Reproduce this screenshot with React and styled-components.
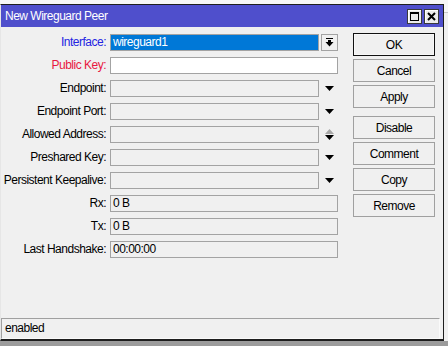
import React from "react";
import styled, { createGlobalStyle, css } from "styled-components";

const GlobalStyle = createGlobalStyle`
  html, body { margin: 0; padding: 0; }
  body {
    width: 448px;
    height: 346px;
    overflow: hidden;
    background: #f7f7f7;
    font-family: "Liberation Sans", Arial, sans-serif;
    font-size: 12px;
    letter-spacing: -0.5px;
    color: #000;
  }
  * { box-sizing: border-box; }
`;

const Desktop = styled.div`
  width: 448px;
  height: 346px;
  display: flex;
  flex-direction: column;
  background: #f7f7f7;
`;

const TopStrip = styled.div`
  height: 4px;
  flex: none;
`;

const WindowRow = styled.div`
  display: flex;
  flex: none;
`;

const Window = styled.div`
  width: 444px;
  height: 337px;
  display: flex;
  flex-direction: column;
  background: #f0f0f0;
  border-top: 1px solid #1e1e1e;
  border-right: 1px solid #1e1e1e;
  border-left: 1px solid #e6e6e6;
  border-bottom: 2px solid #1e1e1e;
`;

const SideStrip = styled.div`
  flex: 1;
  background: #f0f0f0;
  border-top: 1px solid #c8c8c8;
  margin-top: 8px;
`;

const BottomStrip = styled.div`
  flex: 1;
  background: #9c9c9c;
`;

const TitleBar = styled.div`
  height: 22px;
  flex: none;
  display: flex;
  align-items: center;
  background: #4f4fcc;
  color: #fff;
  padding: 0 4px 0 4px;
`;

const Title = styled.div`
  flex: 1;
  line-height: 22px;
`;

const TitleButtons = styled.div`
  display: flex;
  gap: 2px;
`;

const TitleButton = styled.div`
  width: 15px;
  height: 15px;
  display: flex;
  align-items: center;
  justify-content: center;
  background: #ececec;
  border: 1px solid #3a3a3a;
  box-shadow: inset 1px 1px 0 #fff;
`;

const Main = styled.div`
  flex: 1;
  display: flex;
  padding-top: 6px;
`;

const Form = styled.div`
  display: grid;
  grid-template-columns: 105px 228px;
  grid-auto-rows: 17px;
  column-gap: 4px;
  row-gap: 6px;
  padding-top: 1px;
  align-content: start;
`;

const labelColors = { blue: "#2424e2", red: "#e8173f", normal: "#000" };

const Label = styled.div`
  text-align: right;
  line-height: 17px;
  white-space: nowrap;
  color: ${(p) => labelColors[p.$tone || "normal"]};
`;

const FieldRow = styled.div`
  display: flex;
  gap: 2px;
  height: 17px;
`;

const fieldBgs = { selected: "#0078d7", editable: "#fff", readonly: "#f0f0f0" };

const Field = styled.div`
  flex: 1;
  height: 17px;
  border: 1px solid #a3a3a3;
  background: ${(p) => fieldBgs[p.$kind || "readonly"]};
  color: ${(p) => (p.$kind === "selected" ? "#fff" : "#000")};
  line-height: 15px;
  padding-left: 2px;
  white-space: nowrap;
  overflow: hidden;
`;

const ArrowSlot = styled.div`
  width: 17px;
  height: 17px;
  flex: none;
  display: flex;
  flex-direction: column;
  align-items: center;
  justify-content: center;
  gap: 1px;
  ${(p) =>
    p.$boxed &&
    css`
      border: 1px solid #a3a3a3;
      background: #f0f0f0;
    `}
`;

const Buttons = styled.div`
  display: flex;
  flex-direction: column;
  gap: 3px;
  margin-left: 15px;
  width: 82px;
`;

const Button = styled.div`
  height: 23px;
  display: flex;
  align-items: center;
  justify-content: center;
  background: #f0f0f0;
  border: 1px solid ${(p) => (p.$default ? "#111" : "#a0a0a0")};
  ${(p) => p.$default && css`box-shadow: inset 0 0 0 1px #f8f8f8;`}
  margin-top: ${(p) => (p.$spaced ? "5px" : "0")};
`;

const StatusBar = styled.div`
  height: 21px;
  flex: none;
  margin-right: 3px;
  border-top: 1px solid #a0a0a0;
  border-left: 1px solid #a0a0a0;
  border-bottom: 1px solid #fafafa;
  border-right: 1px solid #fafafa;
  padding-left: 3px;
  line-height: 19px;
`;

const DownTri = ({ color = "#000" }) => (
  <svg width="9" height="5" viewBox="0 0 9 5">
    <polygon points="0,0 9,0 4.5,5" fill={color} />
  </svg>
);

const UpTri = ({ color = "#000" }) => (
  <svg width="9" height="5" viewBox="0 0 9 5">
    <polygon points="0,5 9,5 4.5,0" fill={color} />
  </svg>
);

const DropToBottom = () => (
  <svg width="9" height="9" viewBox="0 0 9 9">
    <rect x="1" y="0" width="7" height="1" fill="#000" />
    <rect x="3" y="2" width="3" height="2" fill="#000" />
    <polygon points="0.5,4 8.5,4 4.5,8.5" fill="#000" />
  </svg>
);

const MaxIcon = () => (
  <svg width="9" height="9" viewBox="0 0 9 9">
    <rect x="0.5" y="0.5" width="8" height="8" fill="none" stroke="#000" />
    <rect x="0" y="0" width="9" height="2" fill="#000" />
  </svg>
);

const CloseIcon = () => (
  <svg width="9" height="9" viewBox="0 0 9 9">
    <path d="M1 1 L8 8 M8 1 L1 8" stroke="#000" strokeWidth="2" />
  </svg>
);

const rows = [
  { label: "Interface:", tone: "blue", kind: "selected", value: "wireguard1", slot: "boxed" },
  { label: "Public Key:", tone: "red", kind: "editable", value: "" },
  { label: "Endpoint:", slot: "down" },
  { label: "Endpoint Port:", slot: "down" },
  { label: "Allowed Address:", slot: "spin" },
  { label: "Preshared Key:", slot: "down" },
  { label: "Persistent Keepalive:", slot: "down" },
  { label: "Rx:", value: "0 B" },
  { label: "Tx:", value: "0 B" },
  { label: "Last Handshake:", value: "00:00:00" },
];

const buttons = [
  { text: "OK", def: true },
  { text: "Cancel" },
  { text: "Apply" },
  { text: "Disable", spaced: true },
  { text: "Comment" },
  { text: "Copy" },
  { text: "Remove" },
];

function Slot({ type }) {
  if (type === "boxed")
    return (
      <ArrowSlot $boxed>
        <DropToBottom />
      </ArrowSlot>
    );
  if (type === "down")
    return (
      <ArrowSlot>
        <DownTri />
      </ArrowSlot>
    );
  if (type === "spin")
    return (
      <ArrowSlot>
        <UpTri color="#a8a8a8" />
        <DownTri />
      </ArrowSlot>
    );
  return null;
}

export default function App() {
  return (
    <>
      <GlobalStyle />
      <Desktop>
        <TopStrip />
        <WindowRow>
          <Window>
            <TitleBar>
              <Title>New Wireguard Peer</Title>
              <TitleButtons>
                <TitleButton>
                  <MaxIcon />
                </TitleButton>
                <TitleButton>
                  <CloseIcon />
                </TitleButton>
              </TitleButtons>
            </TitleBar>
            <Main>
              <Form>
                {rows.map((r) => (
                  <React.Fragment key={r.label}>
                    <Label $tone={r.tone}>{r.label}</Label>
                    <FieldRow>
                      <Field $kind={r.kind}>{r.value}</Field>
                      <Slot type={r.slot} />
                    </FieldRow>
                  </React.Fragment>
                ))}
              </Form>
              <Buttons>
                {buttons.map((b) => (
                  <Button key={b.text} $default={b.def} $spaced={b.spaced}>
                    {b.text}
                  </Button>
                ))}
              </Buttons>
            </Main>
            <StatusBar>enabled</StatusBar>
          </Window>
          <SideStrip />
        </WindowRow>
        <BottomStrip />
      </Desktop>
    </>
  );
}
